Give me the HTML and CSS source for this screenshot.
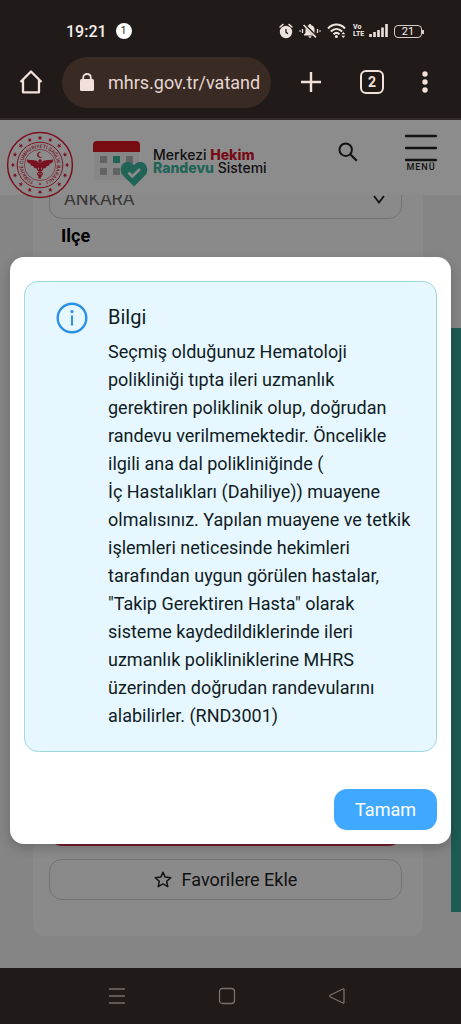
FILE: index.html
```html
<!DOCTYPE html>
<html lang="tr">
<head>
    <meta charset="UTF-8">
    <meta name="viewport" content="width=device-width, initial-scale=1.0">
    <title>Merkezi Hekim Randevu Sistemi</title>
    <link rel="stylesheet" href="styles.css">
</head>
<body>
    <div class="status-bar">
        <div class="status-left">
            <span class="clock">19:21</span>
            <span class="notif">1</span>
        </div>
        <div class="status-icons">
            <!-- alarm -->
            <svg width="14" height="16" viewBox="0 0 14 16">
                <circle cx="7" cy="9" r="6.2" fill="#eee3de"/>
                <path d="M1 4 L4 1.4 M13 4 L10 1.4" stroke="#eee3de" stroke-width="1.4" stroke-linecap="round"/>
                <path d="M7 6 V9.3 L9 10.8" fill="none" stroke="#201b18" stroke-width="1.3"/>
            </svg>
            <!-- sessiz -->
            <svg width="22" height="16" viewBox="0 0 22 16">
                <path d="M5 12.5 V11.5 L6.5 10 V6.5 C6.5 4 8 2.8 9.8 2.3 C9.8 0.5 12.2 0.5 12.2 2.3 C14 2.8 15.5 4 15.5 6.5 V10 L17 11.5 V12.5 Z M9.5 13.3 H12.5 C12.3 15.3 9.7 15.3 9.5 13.3 Z" fill="#eee3de"/>
                <path d="M5 1.5 L18 14.5" stroke="#201b18" stroke-width="3"/>
                <path d="M4.6 2 L17 14.4" stroke="#eee3de" stroke-width="1.5"/>
                <path d="M3.5 6 V10 M1 7.3 V8.7 M18.5 6 V10 M21 7.3 V8.7" stroke="#eee3de" stroke-width="1.3"/>
            </svg>
            <!-- wifi -->
            <svg width="20" height="16" viewBox="0 0 20 16">
                <path d="M1 5.5 C6 0.3 13 0.3 18 5.5 M3.8 8.5 C7.3 5 11.7 5 15.2 8.5 M6.5 11.3 C8.5 9.4 10.5 9.4 12.5 11.3" fill="none" stroke="#eee3de" stroke-width="2"/>
                <circle cx="9.4" cy="13.6" r="1.5" fill="#eee3de"/>
                <path d="M14.3 11.3 L16.3 9 L18.3 11.3 Z M14.3 12.7 L16.3 15 L18.3 12.7 Z" fill="#eee3de"/>
            </svg>
            <span class="volte">Vo<br>LTE</span>
            <!-- sinyal -->
            <svg width="19" height="14" viewBox="0 0 19 14">
                <path d="M1.5 10 V13 M5.5 8 V13 M9.5 6 V13 M13.5 3.5 V13 M17.5 0 V13" stroke="#eee3de" stroke-width="2.6"/>
            </svg>
            <span class="battery">21</span>
        </div>
    </div>

    <div class="browser-bar">
        <button class="icon-btn" aria-label="Ana sayfa">
            <svg width="24" height="26" viewBox="0 0 24 26">
                <path d="M1.5 13 L12 2.5 L22.5 13 M4 11 V23.3 H20 V11" fill="none" stroke="#f1e1da" stroke-width="2.3" stroke-linejoin="round"/>
            </svg>
        </button>
        <div class="url">
            <svg width="14" height="18" viewBox="0 0 14 18">
                <rect x="0" y="6" width="14" height="12" rx="1.5" fill="#f1e1da"/>
                <path d="M3.2 7 V4.6 C3.2 -0.2 10.8 -0.2 10.8 4.6 V7" fill="none" stroke="#f1e1da" stroke-width="1.8"/>
            </svg>
            <input type="text" value="mhrs.gov.tr/vatand" aria-label="Adres">
        </div>
        <div class="browser-actions">
            <button class="icon-btn" aria-label="Yeni sekme">
                <svg width="22" height="22" viewBox="0 0 22 22">
                    <path d="M11 1 V21 M1 11 H21" stroke="#f1e1da" stroke-width="2.4"/>
                </svg>
            </button>
            <button class="icon-btn tabs">2</button>
            <button class="icon-btn" aria-label="Seçenekler">
                <svg width="6" height="22" viewBox="0 0 6 22">
                    <g fill="#f1e1da"><circle cx="3" cy="3" r="2.7"/><circle cx="3" cy="11" r="2.7"/><circle cx="3" cy="19" r="2.7"/></g>
                </svg>
            </button>
        </div>
    </div>

    <main class="viewport">
        <header class="site-header">
            <svg class="emblem" width="68" height="68" viewBox="-34 -34 68 68">
                <defs>
                    <path id="star" d="M0 -29.6 L0.6 -27.9 L2.4 -27.9 L1 -26.8 L1.5 -25.1 L0 -26.1 L-1.5 -25.1 L-1 -26.8 L-2.4 -27.9 L-0.6 -27.9 Z" fill="#e0213c"/>
                    <path id="ring" d="M-6 15.9 A17 17 0 1 1 6 15.9"/>
                </defs>
                <circle r="32.4" fill="none" stroke="#e0213c" stroke-width="1.5"/>
                <circle r="22.8" fill="none" stroke="#e0213c" stroke-width="1"/>
                <circle r="15.6" fill="none" stroke="#e0213c" stroke-width="0.6"/>
                <use href="#star"/>
                <use href="#star" transform="rotate(22.5)"/>
                <use href="#star" transform="rotate(45)"/>
                <use href="#star" transform="rotate(67.5)"/>
                <use href="#star" transform="rotate(90)"/>
                <use href="#star" transform="rotate(112.5)"/>
                <use href="#star" transform="rotate(135)"/>
                <use href="#star" transform="rotate(157.5)"/>
                <use href="#star" transform="rotate(180)"/>
                <use href="#star" transform="rotate(202.5)"/>
                <use href="#star" transform="rotate(225)"/>
                <use href="#star" transform="rotate(247.5)"/>
                <use href="#star" transform="rotate(270)"/>
                <use href="#star" transform="rotate(292.5)"/>
                <use href="#star" transform="rotate(315)"/>
                <use href="#star" transform="rotate(337.5)"/>
                <text class="emblem-text"><textPath href="#ring">TÜRKİYE CUMHURİYETİ SAĞLIK BAKANLIĞI</textPath></text>
                <path d="M1.8 -12.5 A2.9 2.9 0 1 0 2.6 -8.8 A2.3 2.3 0 1 1 1.8 -12.5 Z" fill="#e0213c"/>
                <path d="M-1 -2 C-3 -5.5 -8 -4.5 -13.5 -5.5 C-13 -2.5 -11 -1.5 -9.5 -1.3 C-10 0.5 -8 1.2 -6.8 1 C-6.5 3.5 -3.5 4 -1.5 2.5 L-0.8 5 L0.8 5 L1.5 2.5 C3.5 4 6.5 3.5 6.8 1 C8 1.2 10 0.5 9.5 -1.3 C11 -1.5 13 -2.5 13.5 -5.5 C8 -4.5 3 -5.5 1 -2 Z" fill="#e0213c"/>
                <circle cy="-4" r="1.8" fill="#e0213c"/>
                <path d="M0 -4 V14 M-2.5 3 C-4 6 3 6.5 2.5 9 C2 11 -2 10 -1 13 M2.5 3 C4 6 -3 6.5 -2.5 9 C-2 11 1.5 10.5 1 12" fill="none" stroke="#e0213c" stroke-width="1.3"/>
                <path d="M-1.2 19 H1.2 M0 17.8 V20.2" stroke="#e0213c" stroke-width="0.8"/>
            </svg>
            <a class="brand" href="#">
                <svg width="55" height="46" viewBox="0 0 55 46">
                    <path d="M1 10 H46 V36 C46 37.5 45 39 43 39 H4 C2 39 1 37.5 1 36 Z" fill="#f4f4f4"/>
                    <path d="M0 11 V4 C0 1.5 1.5 0 4 0 H43 C45.5 0 47 1.5 47 4 V11 Z" fill="#d91822"/>
                    <g fill="#b4b4b4">
                        <rect x="7" y="15" width="7" height="7"/>
                        <rect x="33" y="15" width="7" height="7"/>
                        <rect x="7" y="27" width="7" height="7"/>
                        <rect x="20" y="27" width="7" height="7"/>
                    </g>
                    <rect x="20" y="15" width="7" height="7" fill="#3ab69f"/>
                    <path d="M41 45.5 L30 34.5 C25.5 30 28 21.5 34 21 C37.5 20.6 40 22.5 41 24.5 C42 22.5 44.5 20.6 48 21 C54 21.5 56.5 30 52 34.5 Z" fill="#3ab69f"/>
                    <path d="M35.5 31.5 L39.3 35.5 L47 28" fill="none" stroke="#fff" stroke-width="2.6"/>
                </svg>
                <span class="brand-text">Merkezi <b class="red">Hekim</b><br><b class="green">Randevu</b> Sistemi</span>
            </a>
            <button class="search-btn" aria-label="Ara">
                <svg width="20" height="20" viewBox="0 0 20 20">
                    <circle cx="7.7" cy="7.7" r="6.2" fill="none" stroke="#222" stroke-width="2"/>
                    <path d="M12.2 12.2 L18.8 18.8" stroke="#222" stroke-width="2.2"/>
                </svg>
            </button>
            <button class="menu-btn">
                <svg width="32" height="28" viewBox="0 0 32 28">
                    <path d="M1 2 H31 M1 14 H31 M1 26 H31" stroke="#222" stroke-width="2.4" stroke-linecap="round"/>
                </svg>
                MENÜ
            </button>
        </header>

        <div class="page">
            <div class="content">
                <form class="card">
                    <div class="select-wrap">
                        <select aria-label="İl">
                            <option>ANKARA</option>
                        </select>
                        <svg class="chevron" width="12" height="9" viewBox="0 0 12 9">
                            <path d="M1 1 L6 7.5 L11 1" fill="none" stroke="#222" stroke-width="1.8"/>
                        </svg>
                    </div>
                    <h2>Ilçe</h2>
                    <div class="actions">
                        <button type="button" class="btn btn-red" aria-label="Randevu Ara"></button>
                        <button type="button" class="btn">
                            <svg width="18" height="17" viewBox="0 0 18 17">
                                <path d="M9 1.3 L11.2 6.1 L16.8 6.7 L12.7 10.3 L13.8 15.6 L9 12.9 L4.2 15.6 L5.3 10.3 L1.2 6.7 L6.8 6.1 Z" fill="none" stroke="#222" stroke-width="1.5" stroke-linejoin="round"/>
                            </svg>
                            Favorilere Ekle
                        </button>
                    </div>
                </form>
            </div>
            <div class="side-strip"></div>
        </div>

        <div class="overlay">
            <div class="modal" role="dialog" aria-labelledby="modalTitle">
                <div class="alert">
                    <svg class="info-icon" width="32" height="32" viewBox="0 0 32 32">
                        <circle cx="16" cy="16" r="14.3" fill="none" stroke="#2b91e3" stroke-width="2.4"/>
                        <circle cx="16" cy="9.6" r="1.6" fill="#2b91e3"/>
                        <path d="M16 13.5 V23.5" stroke="#2b91e3" stroke-width="2"/>
                    </svg>
                    <div>
                        <h1 id="modalTitle">Bilgi</h1>
                        <p>Seçmiş olduğunuz Hematoloji<br>polikliniği tıpta ileri uzmanlık<br>gerektiren poliklinik olup, doğrudan<br>randevu verilmemektedir. Öncelikle<br>ilgili ana dal polikliniğinde (<br>İç Hastalıkları (Dahiliye)) muayene<br>olmalısınız. Yapılan muayene ve tetkik<br>işlemleri neticesinde hekimleri<br>tarafından uygun görülen hastalar,<br>"Takip Gerektiren Hasta" olarak<br>sisteme kaydedildiklerinde ileri<br>uzmanlık polikliniklerine MHRS<br>üzerinden doğrudan randevularını<br>alabilirler. (RND3001)</p>
                    </div>
                </div>
                <button class="ok-btn">Tamam</button>
            </div>
        </div>
    </main>

    <nav class="nav-bar">
        <button class="icon-btn" aria-label="Son uygulamalar">
            <svg width="18" height="18" viewBox="0 0 18 18">
                <path d="M1 2 H17 M1 9 H17 M1 16 H17" stroke="#77706b" stroke-width="1.3"/>
            </svg>
        </button>
        <button class="icon-btn" aria-label="Ana ekran">
            <svg width="18" height="18" viewBox="0 0 18 18">
                <rect x="1.5" y="1.5" width="15" height="15" rx="3" fill="none" stroke="#77706b" stroke-width="1.3"/>
            </svg>
        </button>
        <button class="icon-btn" aria-label="Geri">
            <svg width="18" height="18" viewBox="0 0 18 18">
                <path d="M15 2 Q16 1.5 16 3 V15 Q16 16.5 15 16 L2.5 10 Q1 9 2.5 8 Z" fill="none" stroke="#77706b" stroke-width="1.3"/>
            </svg>
        </button>
    </nav>
</body>
</html>
```
FILE: styles.css
```css
* {
    box-sizing: border-box;
}
body {
    margin: 0;
    min-height: 100vh;
    display: flex;
    flex-direction: column;
    background-color: #201b18;
    font-family: Roboto, sans-serif;
    font-size: 18px;
}
svg {
    display: block;
    flex-shrink: 0;
}
button, input, select {
    font-family: inherit;
    font-size: inherit;
}

/* Telefon durum çubuğu */
.status-bar {
    display: flex;
    justify-content: space-between;
    align-items: center;
    height: 46px;
    padding: 16px 39px 0 66px;
    color: #f6eeea;
}
.status-left {
    display: flex;
    align-items: center;
    gap: 9px;
}
.clock {
    font-size: 16px;
    font-weight: 500;
}
.notif {
    width: 16px;
    height: 16px;
    border-radius: 50%;
    background-color: #fff;
    color: #201b18;
    font-size: 10px;
    line-height: 16px;
    text-align: center;
}
.status-icons {
    display: flex;
    align-items: center;
    gap: 6px;
}
.volte {
    width: 10px;
    font-size: 7px;
    font-weight: bold;
    line-height: 7px;
}
.battery {
    position: relative;
    width: 28px;
    height: 13px;
    border: 1px solid #d8ccc6;
    border-radius: 4px;
    font-size: 11px;
    line-height: 12px;
    text-align: center;
}
.battery::after {
    content: "";
    position: absolute;
    right: -3px;
    top: 4px;
    width: 2px;
    height: 4px;
    background-color: #d8ccc6;
}

/* Tarayıcı çubuğu */
.browser-bar {
    display: flex;
    align-items: center;
    height: 74px;
    padding: 0 33px 0 19px;
    border-bottom: 2px solid #322b29;
}
.icon-btn {
    padding: 0;
    border: none;
    background: none;
    cursor: pointer;
}
.url {
    flex: 1;
    display: flex;
    align-items: center;
    gap: 14px;
    height: 51px;
    margin-left: 19px;
    padding: 0 8px 0 18px;
    border-radius: 26px;
    background-color: #392a24;
}
.url input {
    width: 100%;
    min-width: 0;
    padding: 0;
    border: none;
    outline: none;
    background: none;
    color: #e6d6cf;
}
.browser-actions {
    display: flex;
    align-items: center;
    gap: 38px;
    margin-left: 29px;
}
.browser-bar .tabs {
    width: 24px;
    height: 24px;
    border: 2px solid #f1e1da;
    border-radius: 6px;
    color: #f1e1da;
    font-size: 14px;
    font-weight: bold;
}

/* Site */
.viewport {
    position: relative;
    flex: 1;
    display: flex;
    flex-direction: column;
    overflow: hidden;
    background-color: #f3f3f3;
}
.site-header {
    position: relative;
    z-index: 1;
    display: flex;
    align-items: flex-start;
    height: 75px;
    padding: 11px 24px 0 6px;
    background-color: #fff;
}
.emblem-text {
    font-size: 5px;
    font-weight: 500;
    fill: #e0213c;
}
.brand {
    display: flex;
    align-items: flex-start;
    gap: 5px;
    margin: 10px 0 0 19px;
    color: #222;
    text-decoration: none;
}
.brand-text {
    margin-top: 7px;
    font-family: Inter, sans-serif;
    font-size: 14px;
    font-weight: 500;
    line-height: 13px;
    white-space: nowrap;
}
.brand-text b {
    font-weight: 800;
}
.red {
    color: #d6152c;
}
.green {
    color: #3ab69f;
}
.search-btn {
    margin: 11px 0 0 auto;
    padding: 0;
    border: none;
    background: none;
}
.menu-btn {
    display: flex;
    flex-direction: column;
    align-items: center;
    margin: 3px 0 0 47px;
    padding: 0;
    border: none;
    background: none;
    color: #222;
    font-size: 9px;
    font-weight: 500;
    letter-spacing: 1px;
}
.page {
    flex: 1;
    display: flex;
}
.content {
    flex: 1;
    display: flex;
    padding: 0 28px 32px 33px;
}
.card {
    flex: 1;
    display: flex;
    flex-direction: column;
    margin-top: -17px;
    padding: 0 21px 36px 16px;
    border-radius: 0 0 12px 12px;
    background-color: #fcfcfc;
}
.select-wrap {
    position: relative;
}
.select-wrap select {
    width: 100%;
    height: 41px;
    padding: 0 14px;
    border: 1px solid #d0d0d0;
    border-radius: 13px;
    background: none;
    color: #666;
    appearance: none;
}
.chevron {
    position: absolute;
    top: 17px;
    right: 17px;
}
.card h2 {
    margin: 5px 12px;
    font-size: 18px;
    line-height: 24px;
}
.actions {
    display: flex;
    flex-direction: column;
    gap: 13px;
    margin-top: auto;
}
.btn {
    display: flex;
    justify-content: center;
    align-items: center;
    gap: 10px;
    height: 41px;
    border: 1px solid #d0d0d0;
    border-radius: 13px;
    background: none;
    color: #222;
}
.btn-red {
    border: none;
    background-color: #d9354f;
}
.side-strip {
    width: 10px;
    margin: 133px 0 56px;
    background-color: #35a698;
}

/* Bilgi penceresi */
.overlay {
    position: absolute;
    inset: 0;
    z-index: 2;
    padding: 137px 10px 0;
    background-color: rgba(0, 0, 0, 0.45);
}
.modal {
    padding: 24px 14px 14px;
    border-radius: 14px;
    background-color: #fff;
    box-shadow: 0 4px 12px rgba(0, 0, 0, 0.2);
}
.alert {
    display: flex;
    align-items: flex-start;
    gap: 20px;
    padding: 20px 20px 21px 31px;
    border: 1px solid #9fd8dc;
    border-radius: 14px;
    background-color: #e6f7ff;
    color: #101c24;
}
.alert h1 {
    margin: 0 0 6px;
    font-size: 20px;
    font-weight: normal;
    line-height: 30px;
}
.alert p {
    margin: 0;
    line-height: 28px;
    white-space: nowrap;
}
.ok-btn {
    display: block;
    height: 41px;
    margin: 37px 0 0 auto;
    padding: 0 21px;
    border: none;
    border-radius: 13px;
    background-color: #40a9ff;
    color: #fff;
    cursor: pointer;
}

/* Android gezinme çubuğu */
.nav-bar {
    display: flex;
    justify-content: center;
    align-items: center;
    gap: 92px;
    height: 56px;
    padding-right: 8px;
}
```
